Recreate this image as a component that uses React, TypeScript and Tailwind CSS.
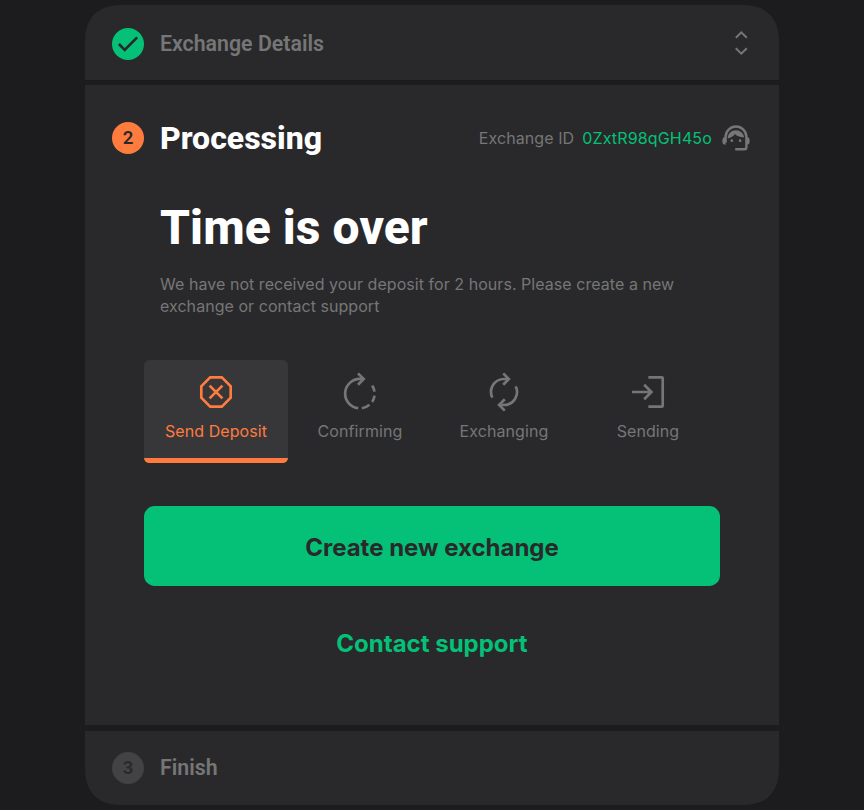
import type { ReactNode } from "react";

function CheckBadge() {
  return (
    <svg viewBox="0 0 32 32" className="size-8 shrink-0" fill="none">
      <circle cx="16" cy="16" r="16" fill="#04c177" />
      <path d="M6.9 16 12.7 21.8 25.2 9.3" stroke="#29292b" strokeWidth="2.6" />
    </svg>
  );
}

function UnfoldIcon() {
  return (
    <svg viewBox="0 0 32 32" className="ml-auto size-8" fill="none" stroke="#767676" strokeWidth="2">
      <path d="M10.8 9.7 16.3 4.3l5.5 5.4M10.8 20.3l5.5 5.4 5.5-5.4" />
    </svg>
  );
}

function SupportIcon() {
  return (
    <svg viewBox="0 0 32 32" className="ml-2 size-8" fill="none">
      <path d="M5.6 20.5V14.9a10.4 10.4 0 0 1 20.8 0v10.4q0 2-2 2h-9.2" stroke="#767676" strokeWidth="2.4" />
      <path d="M5.6 14.6v8.2q-3.2 0-3.2-2.7v-2.5q0-2 3.2-3zM26.4 14.6v8.2q3.2 0 3.2-2.7v-2.5q0-2-3.2-3z" fill="#767676" />
      <path d="M7.7 16.4C7.7 11.4 11.5 8.2 16 8.2c4.1 0 7.5 2.9 8.2 7-4 .2-7.2-.8-9.2-3.1-1.5 2.3-3.9 3.8-7.3 4.3z" fill="#767676" />
      <circle cx="11.8" cy="18.7" r="1.35" fill="#767676" />
      <circle cx="20.1" cy="18.7" r="1.35" fill="#767676" />
    </svg>
  );
}

function OctagonIcon() {
  return (
    <svg viewBox="0 0 40 40" className="size-10" fill="none" stroke="currentColor" strokeWidth="2.67">
      <path d="M14.2 5.3h11.6l8.9 8.9v11.6l-8.9 8.9H14.2l-8.9-8.9V14.2z" />
      <path d="M13.6 13.6l12.8 12.8M26.4 13.6 13.6 26.4" />
    </svg>
  );
}

function RotateIcon() {
  return (
    <svg viewBox="0 0 40 40" className="size-10" fill="none" stroke="currentColor" strokeWidth="2.67">
      <path d="M18.2 36.2A14.67 14.67 0 0 1 20 6.95h4" />
      <path d="M18 1.4l5.7 5.6-5.7 5.7" />
      <path d="M32.2 13.4A14.67 14.67 0 0 1 34.5 19.7M34.5 23.6A14.67 14.67 0 0 1 32.2 29.9M29.5 32.8A14.67 14.67 0 0 1 21.8 36.2" />
    </svg>
  );
}

function ExchangeIcon() {
  return (
    <svg viewBox="0 0 40 40" className="size-10" fill="none" stroke="currentColor" strokeWidth="2.67">
      <path d="M8.3 25.6A13 13 0 0 1 20 7h5" />
      <path d="M19.2 1.4l5.7 5.6-5.7 5.7" />
      <path d="M31.7 14.4A13 13 0 0 1 20 33h-5" />
      <path d="M20.8 38.6 15.1 33l5.7-5.7" />
    </svg>
  );
}

function SendIcon() {
  return (
    <svg viewBox="0 0 40 40" className="size-10" fill="none" stroke="currentColor" strokeWidth="2.67">
      <path d="M4 20h18.8M16.2 12.8l7.2 7.2-7.2 7.2" />
      <path d="M20.4 5.3h13.4q.9 0 .9.9v27.6q0 .9-.9.9H20.4" />
    </svg>
  );
}

function Step({ icon, label, active = false }: { icon: ReactNode; label: string; active?: boolean }) {
  return (
    <div
      className={
        active
          ? "flex h-[103.5px] w-36 flex-col items-center overflow-hidden rounded-[5.33px] bg-[#37373a] text-[#ff7b3e]"
          : "flex h-[103.5px] w-36 flex-col items-center text-[#767676]"
      }
    >
      <div className="mt-[11.67px] flex h-10">{icon}</div>
      <span className="mt-[7.33px] text-[16px] leading-6 tracking-[0.08px]">{label}</span>
      {active && <div className="mt-auto h-[5.33px] w-full bg-[#ff7b3e]" />}
    </div>
  );
}

export default function App() {
  return (
    <main className="flex h-[810px] w-full flex-col items-center gap-[5.33px] overflow-hidden bg-[#1c1c1e] pt-[5.33px] font-['Inter',sans-serif]">
      <section className="flex h-[74.67px] w-[693.33px] shrink-0 items-center rounded-t-[37px] bg-[#29292b] pt-[2px] pr-[21.33px] pl-[26.67px] [corner-shape:superellipse(1.25)]">
        <CheckBadge />
        <h2 className="ml-4 font-['Roboto',sans-serif] text-[21.33px] leading-6 font-semibold text-[#767676]">Exchange Details</h2>
        <UnfoldIcon />
      </section>

      <section className="flex h-[640px] w-[693.33px] shrink-0 flex-col bg-[#29292b]">
        <div className="mt-[36.67px] flex h-8 items-center pr-[26.67px] pl-[26.67px]">
          <span className="flex size-8 items-center justify-center rounded-full bg-[#ff7b3e] font-['Roboto',sans-serif] text-[18.67px] font-semibold text-[#29292b]">2</span>
          <h1 className="ml-4 font-['Roboto',sans-serif] text-[32px] leading-8 font-extrabold text-white">Processing</h1>
          <span className="ml-auto text-[16px] tracking-[0.08px] text-[#767676]">Exchange ID</span>
          <span className="ml-2 text-[16px] tracking-[0.15px] text-[#04c177]">0ZxtR98qGH45o</span>
          <SupportIcon />
        </div>
        <div className="mt-[45.67px] ml-[74.67px] w-[540px]">
          <h3 className="font-['Roboto',sans-serif] text-[48px] leading-[56px] font-extrabold tracking-[0.08px] text-white">Time is over</h3>
          <p className="mt-[18.67px] text-[16px] leading-[21.33px] tracking-[0.05px] text-[#767676]">
            We have not received your deposit for 2 hours. Please create a new
            <br />
            exchange or contact support
          </p>
        </div>
        <div className="mt-[43px] ml-[58.67px] flex w-[576px]">
          <Step active icon={<OctagonIcon />} label="Send Deposit" />
          <Step icon={<RotateIcon />} label="Confirming" />
          <Step icon={<ExchangeIcon />} label="Exchanging" />
          <Step icon={<SendIcon />} label="Sending" />
        </div>
        <button className="mt-[43px] ml-[58.67px] h-20 w-[576px] shrink-0 rounded-[10.67px] bg-[#04c177] pt-[3px] text-[24px] font-bold text-[#29292b]">
          Create new exchange
        </button>
        <button className="mt-[41.5px] ml-[58.67px] h-8 w-[576px] shrink-0 text-[24px] leading-8 font-bold text-[#04c177]">
          Contact support
        </button>
      </section>

      <section className="flex h-[74.67px] w-[693.33px] shrink-0 items-center rounded-b-[37px] bg-[#29292b] pl-[26.67px] [corner-shape:superellipse(1.25)]">
        <span className="flex size-8 items-center justify-center rounded-full bg-[#434345] font-['Roboto',sans-serif] text-[18.67px] font-semibold text-[#29292b]">3</span>
        <h2 className="ml-4 font-['Roboto',sans-serif] text-[21.33px] leading-6 font-semibold text-[#767676]">Finish</h2>
      </section>
    </main>
  );
}
